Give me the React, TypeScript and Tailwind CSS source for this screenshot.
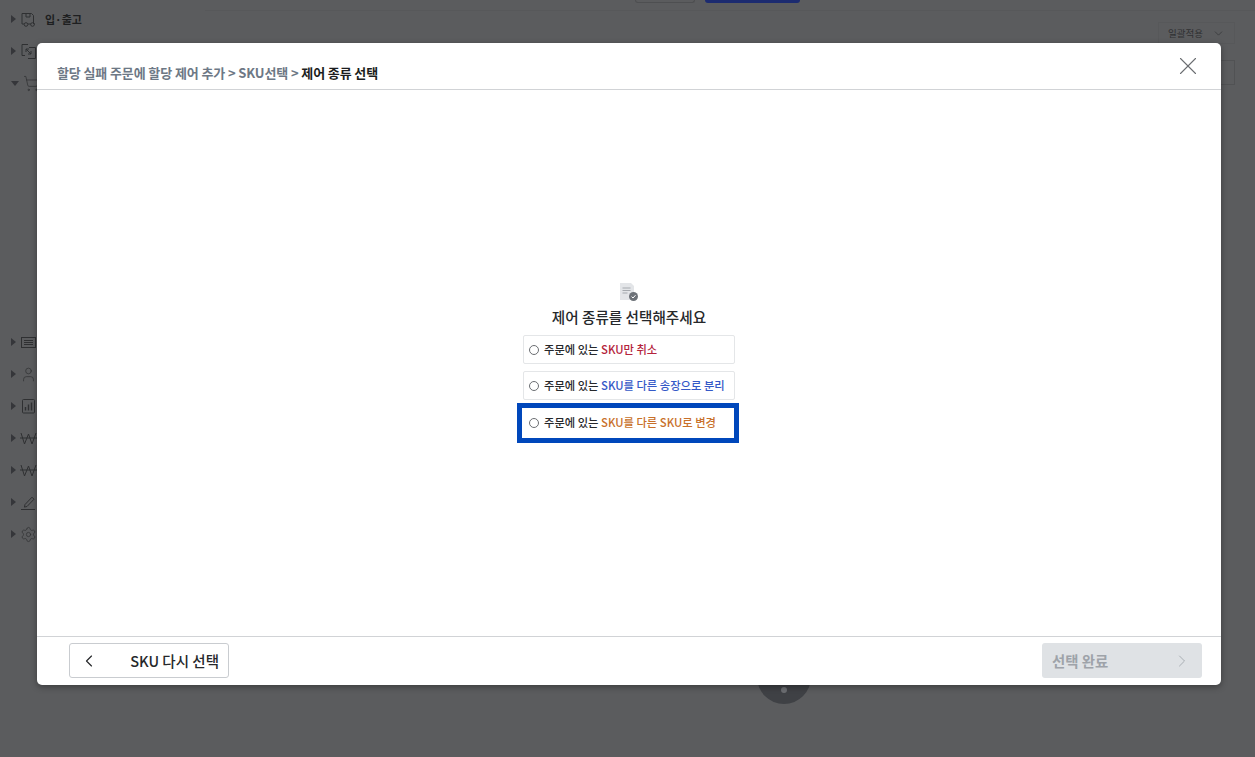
import React from "react";
import { ChevronDown, ChevronLeft, ChevronRight, X, Settings, User, ShoppingCart } from "lucide-react";

const FONT = "font-['Noto_Sans_CJK_KR','Noto_Sans',sans-serif]";

const Svg = ({ children }: { children: React.ReactNode }) => (
  <svg width="17" height="17" viewBox="0 0 17 17" fill="none" stroke="#2f3032" strokeWidth="1">
    {children}
  </svg>
);

const InboundIcon = () => (
  <Svg>
    <path d="M2 13V2.5h9.5l2 2V13M6 3v3h4V3M2 13h2M8 13h3M14 13h1" />
    <circle cx="6" cy="13.5" r="1.8" />
    <circle cx="12.5" cy="13.5" r="1.8" />
  </Svg>
);

const SwapIcon = () => (
  <Svg>
    <path d="M8 1.5H2v11h3M9 4.5h6.5v11H8" />
    <path d="M6 6l5 5M6 9V6h3M11 8v3H8" />
  </Svg>
);

const CardIcon = () => (
  <Svg>
    <rect x="1.5" y="3.5" width="14" height="10" />
    <path d="M4 6.5h9M4 8.5h9M4 10.5h9" />
  </Svg>
);

const ChartIcon = () => (
  <Svg>
    <rect x="2.5" y="1.5" width="12" height="13.5" rx="1" />
    <path d="M5.5 12.5V9M8.5 12.5V6.5M11.5 12.5V4.5" strokeWidth="1.4" />
  </Svg>
);

const WonIcon = () => (
  <Svg>
    <path d="M1 3l3.5 11L8.5 4l3.5 10L16 3M0 8h17" />
  </Svg>
);

const PenIcon = () => (
  <Svg>
    <path d="M5 10.5L12 3.2l2 2L7 12.5l-2.6.6zM1 15.5h14" />
  </Svg>
);

const sideTop = [
  { icon: <InboundIcon />, label: "입·출고", open: false },
  { icon: <SwapIcon />, label: "", open: false },
  { icon: <ShoppingCart size={17} strokeWidth={1} color="#2f3032" />, label: "", open: true },
];

const sideBottom = [
  <CardIcon />,
  <User size={17} strokeWidth={1} color="#2f3032" />,
  <ChartIcon />,
  <WonIcon />,
  <WonIcon />,
  <PenIcon />,
  <Settings size={17} strokeWidth={1} color="#2f3032" />,
];

const Caret = ({ open }: { open?: boolean }) =>
  open ? (
    <span className="h-0 w-0 border-x-[4px] border-t-[5px] border-x-transparent border-t-[#35363a]" />
  ) : (
    <span className="h-0 w-0 border-y-[4px] border-l-[5px] border-y-transparent border-l-[#35363a]" />
  );

const options = [
  { text: "SKU만 취소", color: "text-[#b4243c]", active: false },
  { text: "SKU를 다른 송장으로 분리", color: "text-[#3559c7]", active: false },
  { text: "SKU를 다른 SKU로 변경", color: "text-[#c8702a]", active: true },
];

export default function App() {
  return (
    <div className={`relative h-[757px] w-[1255px] overflow-hidden bg-[#5b5c5e] ${FONT}`}>
      {/* page behind the dim layer */}
      <div className="flex h-full">
        <aside className="flex w-[205px] shrink-0 flex-col pt-[3px] pl-[11px] text-[#2f3032]">
          {sideTop.map((item, i) => (
            <div key={i} className="flex h-[32px] items-center gap-[4px]">
              <Caret open={item.open} />
              <span className="flex w-[17px] justify-center">{item.icon}</span>
              {item.label && <span className="ml-[4px] text-[11px] font-bold text-[#1e1f21]">{item.label}</span>}
            </div>
          ))}
          <div className="h-[227px]" />
          {sideBottom.map((icon, i) => (
            <div key={i} className="flex h-[32px] items-center gap-[4px]">
              <Caret />
              <span className="flex w-[17px] justify-center">{icon}</span>
            </div>
          ))}
        </aside>
        <main className="flex flex-1 flex-col">
          <div className="flex h-[11px] border-b border-[#57585a]">
            <div className="ml-[430px] h-[3px] w-[60px] rounded-b-sm border border-t-0 border-[#4e4f51]" />
            <div className="ml-[10px] h-[3px] w-[95px] rounded-b-sm bg-[#1c2b70]" />
          </div>
          <div className="mt-[11px] mr-[20px] flex h-[22px] w-[77px] items-center justify-between self-end border border-[#57585a] px-[9px] text-[9.5px] text-[#2f3032]">
            <span>일괄적용</span>
            <ChevronDown size={13} strokeWidth={1.2} />
          </div>
          <div className="mt-[16px] mr-[20px] h-[25px] w-[40px] self-end border border-[#515254]" />
        </main>
      </div>

      {/* floating button peeking from under the modal */}
      <div className="absolute top-[650px] left-[757px] h-[54px] w-[54px] rounded-full bg-[#3f4145]">
        <span className="absolute top-[37px] left-[24px] h-[6px] w-[6px] rounded-full bg-[#6c6e72]" />
      </div>

      {/* modal */}
      <div className="absolute top-[43px] left-[37px] flex h-[642px] w-[1184px] flex-col rounded-[5px] bg-white shadow-[0_2px_6px_rgba(0,0,0,0.35)]">
        <header className="flex h-[47px] shrink-0 items-end justify-between border-b border-[#d1d3d6] pr-[18px] pl-[20px]">
          <div className="mb-[6px] text-[13px] leading-[20px] font-bold tracking-[-0.12px] text-[#6d7885]">
            할당 실패 주문에 할당 제어 추가 &gt; SKU선택 &gt; <span className="text-[#1b1d20]">제어 종류 선택</span>
          </div>
          <X size={30} strokeWidth={0.9} className="mb-[8px] text-[#6a6d71]" />
        </header>

        <div className="flex flex-1 flex-col items-center pt-[192px]">
          <svg width="20" height="20" viewBox="0 0 20 20" className="ml-[-1px]">
            <path d="M1 1h11l3 3v14H1z" fill="#e3e5e8" />
            <path d="M3.5 6h8M3.5 8.5h8M3.5 11h5" stroke="#a5a9ae" strokeWidth="1.1" />
            <circle cx="14.5" cy="14.5" r="4.5" fill="#6d7278" />
            <path d="M12.6 14.6l1.4 1.4 2.5-2.8" stroke="#fff" strokeWidth="1" fill="none" />
          </svg>
          <h2 className="mt-[4px] text-[14.6px] leading-[21px] font-medium text-[#26282b]">제어 종류를 선택해주세요</h2>
          <div className="mt-[8px] flex flex-col">
            {options.map((o) => (
              <label
                key={o.text}
                className={`box-border flex items-center text-[11.3px] font-medium text-[#26282b] ${
                  o.active
                    ? "-mx-[6px] -mt-[4px] h-[40px] w-[222px] border-[5px] border-[#0047bb] pl-[7px]"
                    : "mb-[7px] h-[29px] w-[212px] rounded-[2px] border border-[#e4e6e8] pl-[5px]"
                }`}
              >
                <span className="mr-[5px] h-[10px] w-[10px] shrink-0 rounded-full border border-[#6b6e72]" />
                <span className="mt-[-1px]">
                  주문에 있는 <span className={`font-medium ${o.color}`}>{o.text}</span>
                </span>
              </label>
            ))}
          </div>
        </div>

        <footer className="flex h-[49px] shrink-0 items-start justify-between border-t border-[#d1d3d6] pt-[6px] pr-[19px] pl-[32px]">
          <button className="flex h-[35px] w-[160px] items-center justify-between rounded-[3px] border border-[#c9ccd0] px-[9px] text-[14.5px] font-medium text-[#26282b]">
            <ChevronLeft size={20} strokeWidth={1.4} />
            <span>SKU 다시 선택</span>
          </button>
          <button className="flex h-[35px] w-[160px] items-center justify-between rounded-[3px] bg-[#dfe2e5] px-[10px] text-[14.4px] font-bold text-[#9ea3a9]">
            <span>선택 완료</span>
            <ChevronRight size={20} strokeWidth={1} />
          </button>
        </footer>
      </div>
    </div>
  );
}
